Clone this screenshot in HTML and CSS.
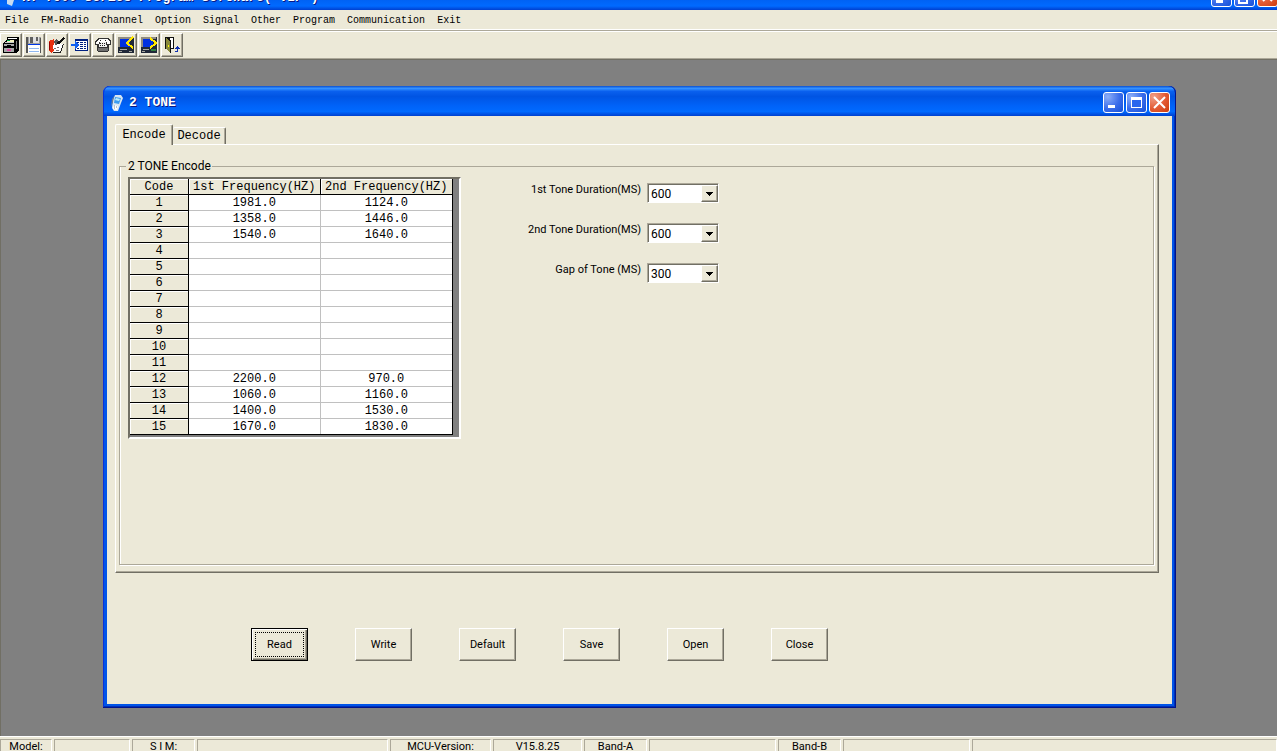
FILE: index.html
```html
<!DOCTYPE html>
<html lang="en">
<head>
<meta charset="utf-8">
<title>2 TONE</title>
<link rel="stylesheet" href="styles.css">
</head>
<body>
<header class="app-title">
  <svg class="app-icon" width="16" height="16" viewBox="0 0 16 16"><path d="M6 1l5 1 1 4-3 9-5-2 0-8z" fill="#c8dcf0"/><path d="M6 4l4 1-1 4-4-1z" fill="#3a90e0"/></svg>
  <span class="app-name">KT-7900 Series Program Software(*VIP*)</span>
  <span class="win-buttons">
    <button class="wb" aria-label="Minimize application"><svg width="19" height="19" viewBox="0 0 19 19"><path d="M4 13h7v3H4z" fill="#fff"/></svg></button>
    <button class="wb" aria-label="Restore application"><svg width="19" height="19" viewBox="0 0 19 19"><path d="M4 8h8v8H4z" fill="none" stroke="#fff" stroke-width="2"/></svg></button>
    <button class="wb close" aria-label="Close application"><svg width="19" height="19" viewBox="0 0 19 19"><path d="M5 5l9 9M14 5l-9 9" stroke="#fff" stroke-width="2"/></svg></button>
  </span>
</header>

<nav class="menu">
  <a href="#">File</a><a href="#">FM-Radio</a><a href="#">Channel</a><a href="#">Option</a><a href="#">Signal</a><a href="#">Other</a><a href="#">Program</a><a href="#">Communication</a><a href="#">Exit</a>
</nav>

<div class="toolbar">
  <button class="tool" aria-label="Open file"><svg width="18" height="18" viewBox="0 0 18 18" shape-rendering="crispEdges"><path d="M5 1h12v13l-3 3H1V7l4-3z" fill="#000"/><path d="M6 2h9v1H6z" fill="#fff"/><path d="M3 6h9v1H3z" fill="#c8c8c8"/><path d="M5 5l2-1h5v2H5z" fill="#f4f4c0"/><path d="M5 4h3v1H5z" fill="#00a040"/><path d="M2 8h10v2H2zM2 12h10v4H2z" fill="#a8a8a8"/><path d="M5 9h4v1H5z" fill="#000"/><path d="M5 13h4v2H5z" fill="#e050a0"/><path d="M14 5h1v8h-1z" fill="#808080"/></svg></button>
  <button class="tool" aria-label="Save file"><svg width="18" height="18" viewBox="0 0 18 18" shape-rendering="crispEdges"><path d="M1 1h15v16H1z" fill="#a0a0a0"/><path d="M1 1h2v16H1zM15 2h1v15h-1z" fill="#555"/><path d="M4 1h10v6H4z" fill="#e0e0e0"/><path d="M5 1h3v6H5zM11 1h2v4h-2z" fill="#606060"/><path d="M3 8h12v9H3z" fill="#fff"/><path d="M3 8h12v1H3z" fill="#0038e8"/><path d="M4 12h10v1H4zM4 15h10v1H4z" fill="#90b8f0"/></svg></button>
  <button class="tool" aria-label="Read from radio"><svg width="18" height="18" viewBox="0 0 18 18" shape-rendering="crispEdges"><path d="M1 5l5-2v11l-3 3-2-2z" fill="#e83010"/><path d="M1 6h1v8H1z" fill="#900"/><path d="M5 9l5-2 6 1-3 8H6z" fill="#fff"/><path d="M16 8l-3 9H5v-1h7l3-8z" fill="#222"/><path d="M15 1l2 1-6 6H8l1-4 2 1z" fill="#111"/><path d="M6 6l2-3 2 2-2 5z" fill="#555"/><path d="M6 12h2v1H6zM9 11h2v1H9zM8 14h3v1H8z" fill="#777"/></svg></button>
  <button class="tool" aria-label="Channel list"><svg width="18" height="18" viewBox="0 0 18 18" shape-rendering="crispEdges"><path d="M4 3h13v12H4z" fill="#002080"/><path d="M5 5h11v9H5z" fill="#fff"/><path d="M6 6h2v1H6zM9 6h3v1H9zM13 6h2v1h-2zM9 8h3v1H9zM13 8h2v1h-2zM9 10h3v1H9zM13 10h2v1h-2zM6 12h2v1H6zM9 12h3v1H9zM13 12h2v1h-2z" fill="#002080"/><path d="M0 8h4V5l5 4-5 4v-3H0z" fill="#1060f0"/></svg></button>
  <button class="tool" aria-label="Phone"><svg width="18" height="18" viewBox="0 0 18 18" shape-rendering="crispEdges"><path d="M4 2h10l3 3v4h-2v5l-1 2H4l-1-2V9H1V5z" fill="#333"/><path d="M5 3h8l3 3v2h-3V6H5v2H2V6z" fill="#fff"/><path d="M6 6h6l1 5H5z" fill="#f0f0f0"/><path d="M6 7h1v1H6zM8 7h1v1H8zM10 7h1v1h-1zM6 9h1v1H6zM8 9h1v1H8zM10 9h1v1h-1zM6 4h1v1H6zM11 4h1v1h-1z" fill="#222"/><path d="M4 12h10v3H4z" fill="#707070"/></svg></button>
  <button class="tool" aria-label="Read data"><svg width="18" height="18" viewBox="0 0 18 18" shape-rendering="crispEdges"><path d="M1 1h16v16H1z" fill="#202838"/><path d="M1 1h13v2H1zM1 3h2v8H1z" fill="#908c80"/><path d="M3 3h10v8H3z" fill="#0030e0"/><path d="M16 1l-6 6 6 5" fill="none" stroke="#ffe800" stroke-width="2"/><path d="M3 13h7v1H3zM12 15h3v1h-3zM2 15h3v1H2z" fill="#a8a8a0"/></svg></button>
  <button class="tool" aria-label="Write data"><svg width="18" height="18" viewBox="0 0 18 18" shape-rendering="crispEdges"><path d="M1 1h16v16H1z" fill="#202838"/><path d="M1 1h15v2H1zM1 3h2v8H1z" fill="#908c80"/><path d="M3 3h10v8H3z" fill="#0030e0"/><path d="M10 2l6 5-6 5" fill="none" stroke="#ffe800" stroke-width="2"/><path d="M3 13h6v1H3zM2 15h3v1H2z" fill="#a8a8a0"/><path d="M11 13h5v2h-5z" fill="#308040"/></svg></button>
  <button class="tool" aria-label="Exit program"><svg width="18" height="18" viewBox="0 0 18 18" shape-rendering="crispEdges"><path d="M2 1h9v12H2z" fill="#111"/><path d="M7 2h3v10H7z" fill="#fff"/><path d="M3 2l4 3v12l-4-4z" fill="#88883a"/><path d="M7 4h1v13H7z" fill="#111"/><path d="M5 9h1v2H5z" fill="#ff0"/><path d="M14 10l3 3h-2v3h-3v-1h2v-2h-2z" fill="#1030b0"/></svg></button>
</div>

<main class="desktop">
  <section class="window" aria-label="2 TONE">
    <header class="window-title">
      <svg class="window-icon" width="16" height="18" viewBox="0 0 16 18"><path d="M6 1l6 0 2 3-2 5-3 8-4 0-2-3 1-8z" fill="#d8e6f2"/><path d="M6 3l6 1-2 6-5-1z" fill="#3c9cf0"/><path d="M7 4l4 1-1 2-4-1z" fill="#b8ecff"/><path d="M5 11l4 1-1 4-4-1z" fill="#fff"/><path d="M3 5l2-3-1 6-2 5z" fill="#6c7c90"/><path d="M5 12h1M7 13h1M5 14h1" stroke="#789"/></svg>
      <h1>2 TONE</h1>
      <span class="win-buttons">
        <button class="wb" aria-label="Minimize"><svg width="19" height="19" viewBox="0 0 19 19"><path d="M4 12h7v3H4z" fill="#fff"/></svg></button>
        <button class="wb" aria-label="Maximize"><svg width="19" height="19" viewBox="0 0 19 19" shape-rendering="crispEdges"><path d="M4 4h11v11H4z" fill="#fff"/><path d="M5 7h9v7H5z" fill="#2a66ee"/></svg></button>
        <button class="wb close" aria-label="Close window"><svg width="19" height="19" viewBox="0 0 19 19"><path d="M4 4l11 11M15 4L4 15" stroke="#fff" stroke-width="2"/></svg></button>
      </span>
    </header>
    <div class="window-body">
      <div class="tabs" role="tablist">
        <button class="tab active" role="tab" aria-selected="true">Encode</button>
        <button class="tab" role="tab" aria-selected="false">Decode</button>
      </div>
      <div class="panel" role="tabpanel">
        <fieldset class="group">
          <legend>2 TONE Encode</legend>
          <div class="content">
            <div class="grid-box">
              <table class="grid">
                <thead><tr><th class="code">Code</th><th>1st Frequency(HZ)</th><th>2nd Frequency(HZ)</th></tr></thead>
                <tbody>
                  <tr><th>1</th><td>1981.0</td><td>1124.0</td></tr>
                  <tr><th>2</th><td>1358.0</td><td>1446.0</td></tr>
                  <tr><th>3</th><td>1540.0</td><td>1640.0</td></tr>
                  <tr><th>4</th><td></td><td></td></tr>
                  <tr><th>5</th><td></td><td></td></tr>
                  <tr><th>6</th><td></td><td></td></tr>
                  <tr><th>7</th><td></td><td></td></tr>
                  <tr><th>8</th><td></td><td></td></tr>
                  <tr><th>9</th><td></td><td></td></tr>
                  <tr><th>10</th><td></td><td></td></tr>
                  <tr><th>11</th><td></td><td></td></tr>
                  <tr><th>12</th><td>2200.0</td><td>970.0</td></tr>
                  <tr><th>13</th><td>1060.0</td><td>1160.0</td></tr>
                  <tr><th>14</th><td>1400.0</td><td>1530.0</td></tr>
                  <tr><th>15</th><td>1670.0</td><td>1830.0</td></tr>
                </tbody>
              </table>
            </div>
            <div class="settings">
              <label for="tone1">1st Tone Duration(MS)</label>
              <div class="combo"><select id="tone1"><option>600</option></select><span class="arrow"><svg width="7" height="4" viewBox="0 0 7 4" shape-rendering="crispEdges"><path d="M0 0h7v1H6v1H5v1H4v1H3V3H2V2H1V1H0z"/></svg></span></div>
              <label for="tone2">2nd Tone Duration(MS)</label>
              <div class="combo"><select id="tone2"><option>600</option></select><span class="arrow"><svg width="7" height="4" viewBox="0 0 7 4" shape-rendering="crispEdges"><path d="M0 0h7v1H6v1H5v1H4v1H3V3H2V2H1V1H0z"/></svg></span></div>
              <label for="gap">Gap of Tone (MS)</label>
              <div class="combo"><select id="gap"><option>300</option></select><span class="arrow"><svg width="7" height="4" viewBox="0 0 7 4" shape-rendering="crispEdges"><path d="M0 0h7v1H6v1H5v1H4v1H3V3H2V2H1V1H0z"/></svg></span></div>
            </div>
          </div>
        </fieldset>
      </div>
      <div class="actions">
        <button class="btn default"><span>Read</span></button>
        <button class="btn">Write</button>
        <button class="btn">Default</button>
        <button class="btn">Save</button>
        <button class="btn">Open</button>
        <button class="btn">Close</button>
      </div>
    </div>
  </section>
</main>

<footer class="status">
  <span>Model:</span><span></span><span>S I M:</span><span></span><span>MCU-Version:</span><span>V15.8.25</span><span>Band-A</span><span></span><span>Band-B</span><span></span><span></span>
</footer>
</body>
</html>
```
FILE: styles.css
```css
:root {
  --face: #ece9d8;
  --shadow: #aca899;
  --dark: #716f64;
  --sans: Roboto, "Liberation Sans", sans-serif;
  --mono: "Liberation Mono", monospace;
}

* { box-sizing: border-box; }

body {
  margin: 0;
  height: 100vh;
  display: flex;
  flex-direction: column;
  overflow: hidden;
  background: var(--face);
  color: #000;
  font: 11px/14px var(--sans);
}

button { font: inherit; color: inherit; padding: 0; margin: 0; }
svg { display: block; }

/* Main window caption, scrolled partly above the top edge */
.app-title {
  flex: none;
  height: 10px;
  display: flex;
  align-items: flex-end;
  overflow: hidden;
  padding: 0 0 3px 3px;
  background: linear-gradient(#0062f4, #006aff 60%, #0040d0);
  color: #fff;
}
.app-icon { flex: none; }
.app-name {
  flex: 1;
  padding: 0 0 2px 3px;
  font: bold 13px/14px var(--mono);
  white-space: pre;
  text-shadow: 1px 1px #0a1883;
}

.win-buttons { display: flex; gap: 2px; }
.app-title .win-buttons { margin-right: -1px; }
.wb {
  width: 21px;
  height: 21px;
  border: 1px solid #fff;
  border-radius: 3px;
  background: radial-gradient(circle at 20% 20%, #8caef8, #3a6cea 55%, #1450d8);
}
.wb.close { background: radial-gradient(circle at 20% 20%, #f0a088, #e35a33 55%, #cc3c0c); }

.menu {
  flex: none;
  height: 20px;
  display: flex;
  gap: 12px;
  padding-left: 5px;
  border-bottom: 1px solid #fff;
  font: 10px/22px var(--mono);
}
.menu a { color: #000; text-decoration: none; }

.toolbar {
  flex: none;
  display: flex;
  gap: 1px;
  padding: 2px 0;
  border-top: 1px solid var(--shadow);
  border-bottom: 1px solid var(--dark);
  box-shadow: inset 0 1px #fff, inset 0 -1px var(--shadow);
}
.tool {
  width: 22px;
  height: 24px;
  display: grid;
  place-items: center;
  border: 1px solid;
  border-color: #fff var(--dark) var(--dark) #fff;
  background: var(--face);
  box-shadow: inset -1px -1px var(--shadow);
}

.desktop {
  flex: 1;
  min-height: 0;
  display: flex;
  padding: 26px 101px 28px 102px;
  background: #808080;
  border-left: 1px solid var(--dark);
}

.window {
  flex: 1;
  min-width: 0;
  display: flex;
  flex-direction: column;
  padding: 0 4px 4px;
  background: #0054e8;
  border-radius: 7px 7px 0 0;
  box-shadow: inset -1px -1px #00138c, inset 1px 0 #0831d9, inset -2px -2px #0030b8;
}
.window-title {
  flex: none;
  height: 30px;
  margin: 0 -4px;
  display: flex;
  align-items: center;
  padding: 3px 6px 0;
  border-radius: 7px 7px 0 0;
  background: linear-gradient(#0a50d0, #3592ff 8%, #0a60ee 18%, #0054e3 35%, #0062f8 65%, #006aff 85%, #0040cf);
  box-shadow: inset 1px 0 #0831d9, inset -1px 0 #00138c;
}
.window-title h1 {
  flex: 1;
  margin: 0;
  padding-left: 4px;
  color: #fff;
  font: bold 13px/16px var(--mono);
  text-shadow: 1px 1px #0a1883;
}

.window-body {
  flex: 1;
  min-height: 0;
  display: flex;
  flex-direction: column;
  padding: 8px 13px 43px 8px;
  background: var(--face);
}

.tabs { display: flex; align-items: flex-end; height: 20px; }
.tab {
  height: 17px;
  width: 53px;
  border: 0 solid;
  border-width: 1px 1px 0 0;
  border-color: #fff var(--dark) #fff #fff;
  border-radius: 2px 2px 0 0;
  background: var(--face);
  box-shadow: inset -1px 0 var(--shadow);
  font: 12px/16px var(--mono);
}
.tab.active {
  height: 21px;
  width: 58px;
  margin-bottom: -1px;
  border-left-width: 1px;
  z-index: 1;
}

.panel {
  flex: 1;
  min-height: 0;
  display: flex;
  padding: 14px 4px 7px 3px;
  border: 1px solid;
  border-color: #fff var(--dark) var(--dark) #fff;
  box-shadow: inset -1px -1px var(--shadow);
}
.group {
  flex: 1;
  min-width: 0;
  margin: 0;
  padding: 4px 8px;
  border: 1px solid var(--shadow);
  box-shadow: 1px 1px #fff, inset 1px 0 #fff;
}
.group legend { margin-left: -2px; padding: 0 1px 0 2px; font-size: 12px; }
.content { display: flex; align-items: flex-start; }

.grid-box {
  padding: 0 6px 2px 0;
  background: #808080;
  border: 2px solid;
  border-color: var(--dark) #fff #fff var(--dark);
}
.grid {
  border-collapse: separate;
  border-spacing: 0;
  table-layout: fixed;
  width: 323px;
  background: #fff;
  border-right: 1px solid #000;
  border-bottom: 1px solid #000;
  font: 12px/13px var(--mono);
  text-align: center;
}
.grid th, .grid td { height: 16px; padding: 2px 0 0; font-weight: normal; white-space: nowrap; }
.grid td { border: 0 solid #c0c0c0; border-width: 0 1px 1px 0; }
.grid th {
  background: var(--face);
  border: 0 solid #000;
  border-width: 0 1px 1px 0;
  box-shadow: inset 1px 1px #fff;
}
.grid tr > :last-child { border-right: 0; }
.grid tr:last-child > * { height: 15px; border-bottom: 0; }
.grid thead tr:last-child > * { height: 16px; border-bottom: 1px solid #000; }
.grid .code { width: 59px; }
.grid tbody th { border-right: 1px solid #000; }

.settings {
  display: grid;
  grid-template-columns: 124px 72px;
  column-gap: 6px;
  row-gap: 20px;
  margin: 6px 0 0 56px;
}
.settings label { text-align: right; }
.combo {
  display: grid;
  grid-template-columns: 1fr 17px;
  height: 20px;
  border: 1px solid;
  border-color: var(--shadow) #fff #fff var(--shadow);
  box-shadow: inset 1px 1px var(--dark);
  background: #fff;
}
.combo select {
  grid-area: 1 / 1 / 2 / 3;
  appearance: none;
  border: 0;
  margin: 1px 0 0 1px;
  padding: 0 0 0 2px;
  background: #fff;
  color: #000;
  font: 12px/16px var(--sans);
}
.combo .arrow {
  grid-area: 1 / 2 / 2 / 3;
  display: grid;
  place-items: center;
  margin-top: 1px;
  pointer-events: none;
  background: var(--face);
  border: 1px solid;
  border-color: #fff var(--dark) var(--dark) #fff;
  box-shadow: inset -1px -1px var(--shadow);
}

.actions {
  flex: none;
  display: flex;
  gap: 47px;
  margin-top: 55px;
  padding-left: 136px;
}
.btn {
  width: 57px;
  height: 33px;
  border: 1px solid;
  border-color: #fff var(--dark) var(--dark) #fff;
  background: var(--face);
  box-shadow: inset -1px -1px var(--shadow);
}
.btn.default {
  display: flex;
  padding: 3px;
  border-color: #000;
  box-shadow: inset 1px 1px #fff, inset -1px -1px var(--dark), inset -2px -2px var(--shadow);
}
.btn.default span {
  flex: 1;
  align-self: stretch;
  border: 1px dotted #000;
  line-height: 23px;
}

.status {
  flex: none;
  height: 15px;
  display: grid;
  grid-template-columns: 52px 76px 63px 191px 101px 89px 63px 127px 63px 127px 1fr;
  gap: 2px;
  padding-top: 2px;
  border-top: 1px solid #fff;
  overflow: hidden;
}
.status span {
  height: 18px;
  text-align: center;
  border: 1px solid;
  border-color: var(--shadow) #fff #fff var(--shadow);
  white-space: pre;
}
```
